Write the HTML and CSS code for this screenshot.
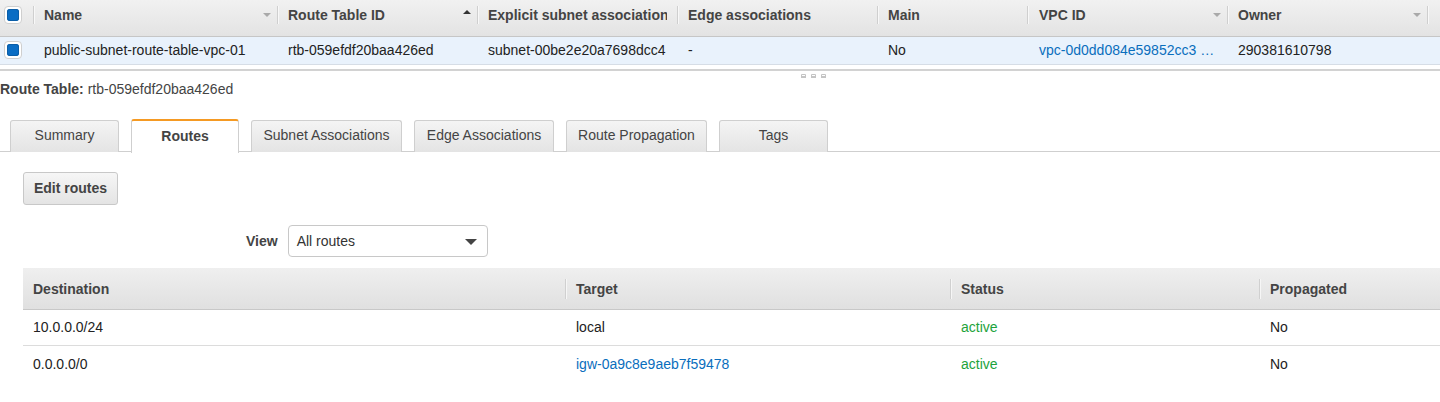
FILE: index.html
```html
<!DOCTYPE html>
<html>
<head>
<meta charset="utf-8">
<link rel="stylesheet" href="styles.css">
</head>
<body>
<div class="grid">
  <div class="grid-head">
    <div class="gc chk-cell"><span class="chk"><span class="chk-in"></span></span></div>
    <div class="gc sep">Name<span class="caret down"></span></div>
    <div class="gc sep">Route Table ID<span class="caret up"></span></div>
    <div class="gc sep"><span class="clip">Explicit subnet association</span></div>
    <div class="gc sep">Edge associations</div>
    <div class="gc sep">Main</div>
    <div class="gc sep vpc">VPC ID<span class="caret down"></span></div>
    <div class="gc sep">Owner<span class="caret down"></span></div>
    <div class="gc sep last"></div>
  </div>
  <div class="grid-row">
    <div class="gc chk-cell"><span class="chk"><span class="chk-in"></span></span></div>
    <div class="gc">public-subnet-route-table-vpc-01</div>
    <div class="gc">rtb-059efdf20baa426ed</div>
    <div class="gc">subnet-00be2e20a7698dcc4</div>
    <div class="gc">-</div>
    <div class="gc">No</div>
    <div class="gc vpc"><span class="link">vpc-0d0dd084e59852cc3 …</span></div>
    <div class="gc">290381610798</div>
    <div class="gc"></div>
  </div>
</div>
<div class="splitter">
  <div class="handle"><span></span><span></span><span></span></div>
</div>
<div class="detail-title"><b>Route Table:</b> rtb-059efdf20baa426ed</div>
<div class="tabs">
  <div class="tab w109">Summary</div>
  <div class="tab w108 active">Routes</div>
  <div class="tab w151">Subnet Associations</div>
  <div class="tab w140">Edge Associations</div>
  <div class="tab w141">Route Propagation</div>
  <div class="tab w109">Tags</div>
</div>
<div class="panel">
  <button class="btn">Edit routes</button>
  <div class="view-row">
    <span class="view-label">View</span>
    <div class="select">All routes<span class="sel-arrow"></span></div>
  </div>
  <div class="rtable">
    <div class="rhead">
      <div class="rc">Destination</div>
      <div class="rc sep2">Target</div>
      <div class="rc sep2">Status</div>
      <div class="rc sep2">Propagated</div>
    </div>
    <div class="rrow">
      <div class="rc">10.0.0.0/24</div>
      <div class="rc sep2">local</div>
      <div class="rc sep2 green">active</div>
      <div class="rc sep2">No</div>
    </div>
    <div class="rrow">
      <div class="rc">0.0.0.0/0</div>
      <div class="rc sep2"><span class="link">igw-0a9c8e9aeb7f59478</span></div>
      <div class="rc sep2 green">active</div>
      <div class="rc sep2">No</div>
    </div>
  </div>
</div>
</body>
</html>
```
FILE: styles.css
```css
* { box-sizing: border-box; }
html, body { margin: 0; padding: 0; background: #fff; }
body { font-family: "Liberation Sans", Arial, sans-serif; font-size: 14px; color: #222; width: 1440px; height: 402px; overflow: hidden; }

.grid-head, .grid-row {
  display: grid;
  grid-template-columns: 33px 244px 200px 200px 200px 150px 200px 200px 13px;
}
.grid-head {
  height: 37px;
  background: linear-gradient(#f1f1f1, #e3e3e3);
  border-bottom: 1px solid #c6c6c6;
  font-weight: bold;
  color: #444;
}
.grid-row {
  height: 28px;
  background: #e9f2fc;
  border-bottom: 1px solid #d6dde6;
}
.gc {
  position: relative;
  display: flex;
  align-items: center;
  padding-left: 11px;
  white-space: nowrap;
  overflow: hidden;
}
.gc.vpc { padding-left: 12px; }
.grid-head .gc { padding-bottom: 7px; }
.grid-row .gc { padding-bottom: 1px; }
.grid-head .sep::before {
  content: "";
  position: absolute;
  left: 0; top: 6px;
  height: 18px;
  border-left: 1px solid #cfcfcf;
  border-right: 1px solid #f8f8f8;
}
.clip { overflow: hidden; display: block; width: 179px; }
.chk-cell { padding-left: 4px; }
.grid-head .chk-cell { padding-bottom: 6px; }
.chk {
  width: 18px; height: 18px;
  border: 1px solid #cfcfcf;
  border-radius: 4px;
  background: #fff;
  display: flex; align-items: center; justify-content: center;
}
.chk-in {
  width: 12px; height: 12px;
  background: #0a6dc4;
  border-radius: 3px;
  box-shadow: inset 0 0 0 1px #0a5ea8;
}
.caret {
  position: absolute;
  right: 6px; top: 12px;
  width: 0; height: 0;
  border-left: 4px solid transparent;
  border-right: 4px solid transparent;
}
.caret.down { border-top: 4px solid #a9a9a9; top: 13px; }
.caret.up { border-bottom: 4px solid #333; top: 10px; }

.link { color: #0a6ebd; }
.green { color: #1da33c; }

.splitter {
  height: 11px;
  border-top: 2px solid #d2d2d2;
  margin-top: 4px;
  display: flex;
  justify-content: center;
  padding-left: 186px;
}
.handle { display: flex; gap: 5px; padding-top: 3px; }
.handle span {
  width: 5px; height: 4px;
  border: 1px solid #c4c4c4;
  border-bottom-width: 2px;
  border-radius: 1px 1px 0 0;
}

.detail-title {
  font-size: 14px;
  line-height: 16px;
  color: #444;
  height: 17px;
  padding-top: 1px;
}
.detail-title b { color: #444; }

.tabs {
  margin-top: 22px;
  display: flex;
  gap: 12px;
  padding-left: 10px;
  border-bottom: 1px solid #cfcfcf;
  height: 33px;
}
.tab {
  height: 32px;
  border: 1px solid #cfcfcf;
  border-bottom: none;
  border-radius: 3px 3px 0 0;
  background: linear-gradient(#f4f4f4, #e4e4e4);
  color: #444;
  display: flex; align-items: center; justify-content: center;
  padding-bottom: 3px;
  margin-top: 1px;
}
.tab.active {
  background: #fff;
  border-top: 2px solid #f59a23;
  font-weight: bold;
  height: 34px;
  margin-top: 0;
  margin-bottom: -1px;
  padding-top: 0;
  padding-bottom: 2px;
}
.w108 { width: 108px; }
.w109 { width: 109px; }
.w140 { width: 140px; }
.w141 { width: 141px; }
.w151 { width: 151px; }

.panel { padding-left: 23px; padding-top: 20px; }
.btn {
  font-family: "Liberation Sans", Arial, sans-serif;
  font-size: 14px;
  font-weight: bold;
  color: #444;
  width: 95px; height: 33px;
  border: 1px solid #c8c8c8;
  border-radius: 3px;
  background: linear-gradient(#f6f6f6, #e4e4e4);
  padding: 0 0 2px 0;
  display: block;
}
.view-row {
  display: flex;
  align-items: center;
  margin-top: 20px;
  padding-left: 223px;
  gap: 10px;
}
.view-label { font-weight: bold; color: #444; }
.select {
  position: relative;
  width: 200px; height: 32px;
  border: 1px solid #c8c8c8;
  border-radius: 4px;
  padding-left: 8px;
  display: flex; align-items: center;
  color: #333;
}
.sel-arrow {
  position: absolute;
  right: 10px; top: 13px;
  border-left: 6px solid transparent;
  border-right: 6px solid transparent;
  border-top: 6px solid #444;
}

.rtable { margin-top: 11px; }
.rhead, .rrow {
  display: grid;
  grid-template-columns: 542px 385px 309px 181px;
}
.rhead {
  height: 42px;
  background: linear-gradient(#efefef, #e0e0e0);
  border-bottom: 1px solid #c8c8c8;
  font-weight: bold;
  color: #444;
}
.rrow {
  height: 36px;
  border-bottom: 1px solid #dcdcdc;
}
.rrow:last-child { border-bottom: none; }
.rc {
  position: relative;
  display: flex;
  align-items: center;
  padding-left: 10px;
  white-space: nowrap;
}
.rc.sep2 { padding-left: 11px; }
.rrow .rc { padding-bottom: 1px; }
.rhead .rc { padding-top: 1px; }
.rhead .sep2::before {
  content: "";
  position: absolute;
  left: 0; top: 11px;
  height: 20px;
  border-left: 1px solid #d0d0d0;
  border-right: 1px solid #f6f6f6;
}
```
